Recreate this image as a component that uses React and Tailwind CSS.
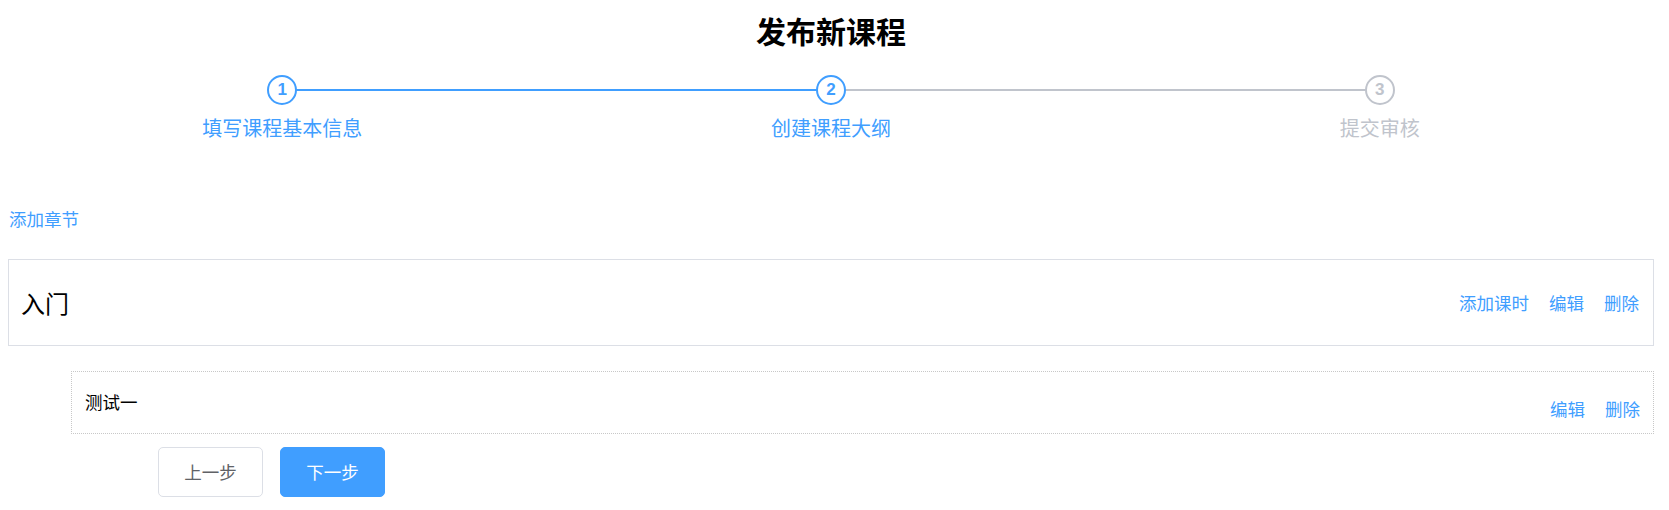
import React from "react";

const steps = [
  { no: 1, title: "填写课程基本信息", done: true },
  { no: 2, title: "创建课程大纲", done: true },
  { no: 3, title: "提交审核", done: false },
];

const chapters = [
  {
    id: 1,
    title: "入门",
    lessons: [{ id: 11, title: "测试一" }],
  },
];

function Steps() {
  return (
    <div className="mt-[25px] flex">
      {steps.map((s, i) => (
        <div key={s.no} className="relative flex flex-1 flex-col items-center">
          {/* connector line to the next step */}
          {i < steps.length - 1 && (
            <div
              className={
                "absolute left-1/2 top-[14px] h-[2px] w-full " +
                (steps[i + 1].done ? "bg-[#409EFF]" : "bg-[#C0C4CC]")
              }
            />
          )}
          <div
            className={
              "relative z-10 flex h-[30px] w-[30px] items-center justify-center rounded-full border-2 bg-white font-['Liberation_Sans',sans-serif] text-[17px] font-bold " +
              (s.done ? "border-[#409EFF] text-[#409EFF]" : "border-[#C0C4CC] text-[#C0C4CC]")
            }
          >
            {s.no}
          </div>
          <div
            className={
              "mt-[9px] text-[20px] leading-[28px] " +
              (s.done ? "text-[#409EFF]" : "text-[#C0C4CC]")
            }
          >
            {s.title}
          </div>
        </div>
      ))}
    </div>
  );
}

export default function App() {
  return (
    <div className="min-h-screen bg-white font-['Noto_Sans_CJK_SC',sans-serif]">
      <div className="ml-[8px] w-[1646px]">
        <h1 className="pt-[10px] text-center text-[30px] font-bold leading-[40px] text-black">
          发布新课程
        </h1>

        <Steps />

        {/* outline */}
        <div className="mt-[65px]">
          <a className="block pl-[1px] text-[17.5px] leading-[24px] text-[#409EFF] cursor-pointer">
            添加章节
          </a>

          {chapters.map((c) => (
            <div key={c.id}>
              <div className="mt-[28px] flex h-[87px] items-center justify-between border border-[#dcdfe6] pl-[12px] pr-[14px]">
                <span className="text-[24px] leading-[32px] text-black">{c.title}</span>
                <div className="flex gap-[20px] text-[17.5px] leading-[24px] text-[#409EFF]">
                  <a className="cursor-pointer">添加课时</a>
                  <a className="cursor-pointer">编辑</a>
                  <a className="cursor-pointer">删除</a>
                </div>
              </div>

              {c.lessons.map((l) => (
                <div
                  key={l.id}
                  className="ml-[63px] mt-[25px] flex h-[63px] items-start justify-between border border-dotted border-[#c8c8c8] pl-[13px] pr-[13px]"
                >
                  <span className="mt-[18px] text-[17.5px] leading-[24px] text-black">{l.title}</span>
                  <div className="mt-[25px] flex gap-[20px] text-[17.5px] leading-[24px] text-[#409EFF]">
                    <a className="cursor-pointer">编辑</a>
                    <a className="cursor-pointer">删除</a>
                  </div>
                </div>
              ))}
            </div>
          ))}
        </div>

        <div className="mt-[13px] flex gap-[17px] pl-[150px]">
          <button className="h-[50px] w-[105px] rounded-[5px] border border-[#dcdfe6] bg-white text-[17.5px] text-[#606266]">
            上一步
          </button>
          <button className="h-[50px] w-[105px] rounded-[5px] border border-[#409EFF] bg-[#409EFF] text-[17.5px] text-white">
            下一步
          </button>
        </div>
      </div>
    </div>
  );
}
